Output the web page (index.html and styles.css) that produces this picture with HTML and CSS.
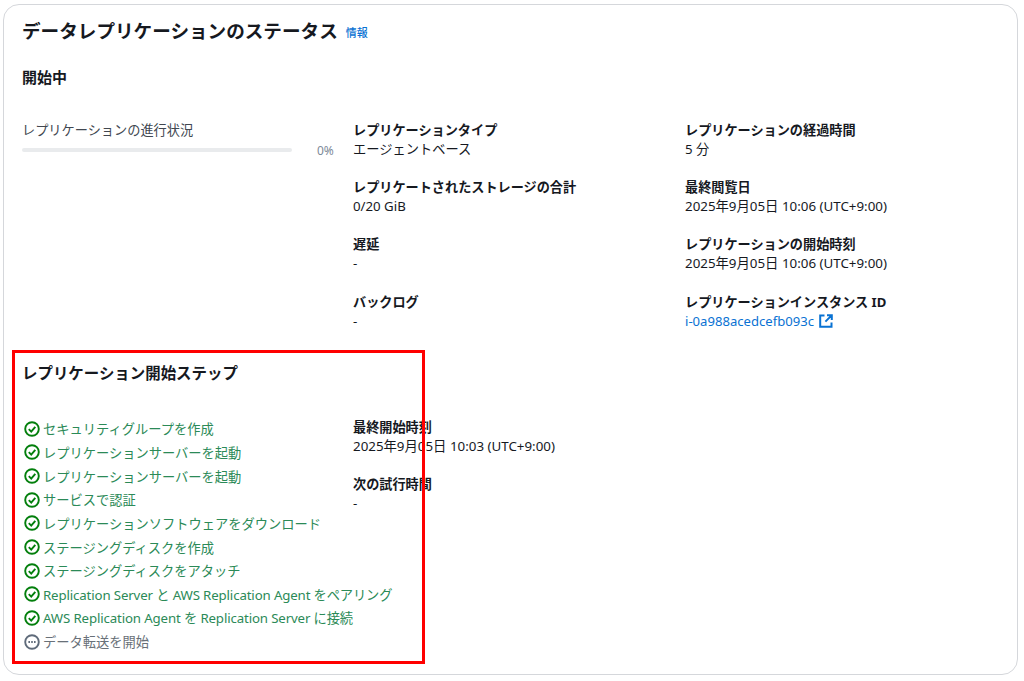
FILE: index.html
```html
<!DOCTYPE html>
<html lang="ja">
<head>
<meta charset="utf-8">
<title>データレプリケーションのステータス</title>
<link rel="stylesheet" href="styles.css">
</head>
<body>
<main class="card">
  <header class="head">
    <h1>データレプリケーションのステータス</h1>
    <a class="info">情報</a>
  </header>
  <h2 class="state">開始中</h2>
  <section class="grid">
    <div class="progress">
      <div class="progress-label">レプリケーションの進行状況</div>
      <div class="progress-row"><div class="bar"></div><span class="pct">0%</span></div>
    </div>
    <div class="col">
      <div class="kv"><div class="k">レプリケーションタイプ</div><div class="v">エージェントベース</div></div>
      <div class="kv"><div class="k">レプリケートされたストレージの合計</div><div class="v">0/20 GiB</div></div>
      <div class="kv"><div class="k">遅延</div><div class="v">-</div></div>
      <div class="kv"><div class="k">バックログ</div><div class="v">-</div></div>
    </div>
    <div class="col">
      <div class="kv"><div class="k">レプリケーションの経過時間</div><div class="v">5 分</div></div>
      <div class="kv"><div class="k">最終閲覧日</div><div class="v date">2025年9月05日 10:06 (UTC+9:00)</div></div>
      <div class="kv"><div class="k">レプリケーションの開始時刻</div><div class="v date">2025年9月05日 10:06 (UTC+9:00)</div></div>
      <div class="kv"><div class="k">レプリケーションインスタンス ID</div>
        <div class="v link">i-0a988acedcefb093c
          <svg class="ext" viewBox="0 0 14 14" width="14" height="14" aria-hidden="true"><path d="M5.5 1.5H1.2v11.3h11.3V8.5M8 1.2h4.8V6M12.6 1.4 6.4 7.6" fill="none" stroke="currentColor" stroke-width="2"/></svg>
        </div>
      </div>
    </div>
  </section>
  <h2 class="steps-title">レプリケーション開始ステップ</h2>
  <section class="grid lower">
    <ul class="steps">
      <li class="ok"><svg class="ic"><use href="#check"/></svg>セキュリティグループを作成</li>
      <li class="ok"><svg class="ic"><use href="#check"/></svg>レプリケーションサーバーを起動</li>
      <li class="ok"><svg class="ic"><use href="#check"/></svg>レプリケーションサーバーを起動</li>
      <li class="ok"><svg class="ic"><use href="#check"/></svg>サービスで認証</li>
      <li class="ok"><svg class="ic"><use href="#check"/></svg>レプリケーションソフトウェアをダウンロード</li>
      <li class="ok"><svg class="ic"><use href="#check"/></svg>ステージングディスクを作成</li>
      <li class="ok"><svg class="ic"><use href="#check"/></svg>ステージングディスクをアタッチ</li>
      <li class="ok latin"><svg class="ic"><use href="#check"/></svg>Replication Server と AWS Replication Agent をペアリング</li>
      <li class="ok latin"><svg class="ic"><use href="#check"/></svg>AWS Replication Agent を Replication Server に接続</li>
      <li class="wait"><svg class="ic"><use href="#dots"/></svg>データ転送を開始</li>
    </ul>
    <div class="col">
      <div class="kv"><div class="k">最終開始時刻</div><div class="v date">2025年9月05日 10:03 (UTC+9:00)</div></div>
      <div class="kv"><div class="k">次の試行時間</div><div class="v">-</div></div>
    </div>
  </section>
  <div class="highlight"></div>
</main>
<svg class="defs" width="0" height="0" aria-hidden="true">
  <symbol id="check" viewBox="0 0 16 16"><circle cx="8" cy="8" r="6.8" fill="none" stroke="currentColor" stroke-width="1.9"/><path d="M4.8 8.2 7.2 10.6 11.3 5.8" fill="none" stroke="currentColor" stroke-width="1.9"/></symbol>
  <symbol id="dots" viewBox="0 0 16 16"><circle cx="8" cy="8" r="6.8" fill="none" stroke="currentColor" stroke-width="1.9"/><path d="M4.4 8h1.6M7.2 8h1.6M10 8h1.6" fill="none" stroke="currentColor" stroke-width="1.8"/></symbol>
</svg>
</body>
</html>
```
FILE: styles.css
```css
* { box-sizing: border-box; }
html, body { margin: 0; height: 100%; }
body {
  background: #fff;
  color: #16191f;
  font-family: "Noto Sans", "Noto Sans CJK JP", sans-serif;
  font-size: 13.25px;
  padding: 4px 6px 6px 3px;
  overflow: hidden;
}
.card {
  position: relative;
  height: 671px;
  border: 1px solid #d5d7db;
  border-radius: 16px;
  padding: 12px 19px 0 18px;
}
.head { display: flex; align-items: center; gap: 8px; height: 28px; }
h1 { margin: 0; font-size: 18.6px; font-weight: 700; line-height: 28px; }
.info { color: #0972d3; font-size: 11px; font-weight: 500; margin-top: 1px; }
.state { margin: 22px 0 0; font-size: 15px; font-weight: 700; line-height: 20px; }
.grid { display: grid; grid-template-columns: 331px 332px 1fr; margin-top: 33px; }
.progress-label { color: #414750; font-size: 13.2px; line-height: 20px; }
.progress-row { display: flex; align-items: center; height: 20px; }
.bar { width: 270px; height: 4px; background: #e9ebed; border-radius: 2px; }
.pct { margin-left: 25px; color: #7d8998; font-size: 12px; }
.kv { height: 57.2px; }
.k { font-weight: 700; font-size: 13.15px; line-height: 20px; }
.v { font-size: 13.25px; line-height: 19px; color: #16191f; }
.date { font-size: 13.35px; }
.link { color: #0972d3; font-size: 13.1px; display: flex; align-items: center; gap: 5px; }
.ext { display: block; }
.steps-title { margin: 0; font-size: 15.45px; font-weight: 700; line-height: 20px; position: absolute; left: 18px; top: 358px; }
.lower { position: absolute; left: 18px; right: 19px; top: 412px; margin: 0; }
.steps { list-style: none; margin: 0; padding: 0; font-size: 13.25px; }
.steps li { display: flex; align-items: center; gap: 3px; height: 23.65px; margin-left: 2px; white-space: nowrap; }
.steps .latin { letter-spacing: -0.13px; }
.ok { color: #2b8a57; }
.wait { color: #687078; }
.ic { width: 16px; height: 16px; flex: none; }
.ok .ic { color: #037f0c; }
.wait .ic { color: #5f6b7a; }
.highlight {
  position: absolute;
  left: 8px; top: 345px;
  width: 413px; height: 314px;
  border: 3px solid #f00;
  pointer-events: none;
}
.defs { position: absolute; }
```
